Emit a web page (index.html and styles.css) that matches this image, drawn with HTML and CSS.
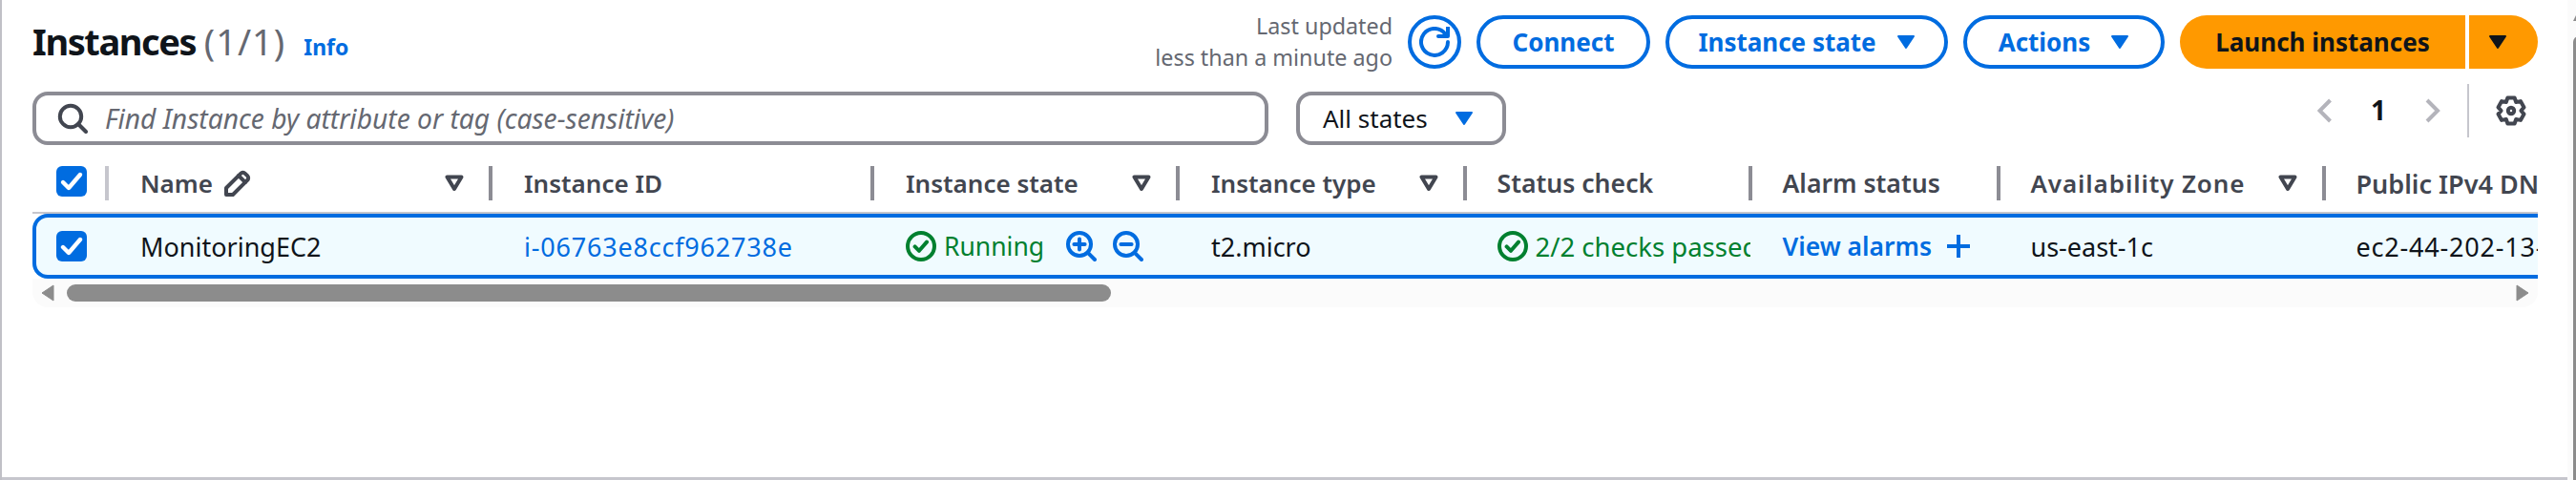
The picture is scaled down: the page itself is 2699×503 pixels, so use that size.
FILE: index.html
```html
<!DOCTYPE html>
<html lang="en">
<head>
<meta charset="utf-8">
<title>Instances</title>
<link rel="stylesheet" href="styles.css">
</head>
<body>
<div class="window">
  <main class="main">
    <header class="head">
      <h1 class="title">Instances <span class="count">(1/1)</span><a class="info">Info</a></h1>
      <div class="actions">
        <p class="updated">Last updated<br>less than a minute ago</p>
        <button class="btn round"><svg class="i32" viewBox="0 0 16 16"><path class="st" d="M15 8a7 7 0 1 1-1.3-4.1"/><path class="st" d="M10 5h5V0"/></svg></button>
        <button class="btn connect">Connect</button>
        <button class="btn state">Instance state<svg class="caret" viewBox="0 0 20 16"><path d="M2 2h16l-8 12z"/></svg></button>
        <button class="btn acts">Actions<svg class="caret" viewBox="0 0 20 16"><path d="M2 2h16l-8 12z"/></svg></button>
        <div class="launch">
          <button class="lmain">Launch instances</button>
          <button class="lcaret"><svg class="caret" viewBox="0 0 20 16"><path d="M2 2h16l-8 12z"/></svg></button>
        </div>
      </div>
    </header>

    <div class="tools">
      <div class="search">
        <svg class="i32 sicon" viewBox="0 0 16 16"><circle class="st" cx="7" cy="7" r="5.6"/><path class="st" d="M11 11l4 4"/></svg>
        <span class="ph">Find Instance by attribute or tag (case-sensitive)</span>
      </div>
      <div class="select">All states<svg class="caret" viewBox="0 0 20 16"><path d="M2 2h16l-8 12z"/></svg></div>
      <div class="pager">
        <svg class="chev" viewBox="0 0 18 28"><path d="M13.500 3L2.500 14l11 11"/></svg>
        <span class="pnum">1</span>
        <svg class="chev" viewBox="0 0 18 28"><path d="M3 3l11 11L3 25"/></svg>
        <span class="pdiv"></span>
        <svg class="i32 gear" viewBox="0 0 16 16"><path class="st" d="M6.19 1.24h3.62l.79 2.26 2.35-.45 1.81 3.14-1.56 1.81 1.56 1.81-1.81 3.14-2.35-.45-.79 2.26H6.19l-.79-2.26-2.35.45-1.81-3.14L2.8 8 1.24 6.19l1.81-3.14 2.35.45z"/><circle class="st" cx="8" cy="8" r="1.6"/></svg>
      </div>
    </div>

    <div class="tablewrap">
      <div class="grid hrow">
        <div class="hc cb"><span class="check"><svg viewBox="0 0 16 16"><path d="M3.5 8.5l3 3 6-7"/></svg></span></div>
        <div class="hc">Name<svg class="i32 pencil" viewBox="0 0 16 16"><path class="st" d="M2 14v-3.5l7.6-7.6a1.6 1.6 0 0 1 2.3 0l1.2 1.2a1.6 1.6 0 0 1 0 2.3L5.500 14z"/><path class="st" d="M8.500 4l3.500 3.500"/></svg><svg class="filter" viewBox="0 0 20 18"><path d="M2.500 2.500h15L10 15z"/></svg></div>
        <div class="hc">Instance ID</div>
        <div class="hc">Instance state<svg class="filter" viewBox="0 0 20 18"><path d="M2.500 2.500h15L10 15z"/></svg></div>
        <div class="hc">Instance type<svg class="filter" viewBox="0 0 20 18"><path d="M2.500 2.500h15L10 15z"/></svg></div>
        <div class="hc wide">Status check</div>
        <div class="hc wide">Alarm status</div>
        <div class="hc"><span class="az">Availability Zone</span><svg class="filter" viewBox="0 0 20 18"><path d="M2.500 2.500h15L10 15z"/></svg></div>
        <div class="hc last">Public IPv4 DNS</div>
      </div>
      <div class="grid drow">
        <div class="dc cb"><span class="check"><svg viewBox="0 0 16 16"><path d="M3.5 8.500l3 3 6-7"/></svg></span></div>
        <div class="dc">MonitoringEC2</div>
        <div class="dc link digits">i-06763e8ccf962738e</div>
        <div class="dc ok run">
          <svg class="i32 okicon" viewBox="0 0 16 16"><circle class="st" cx="8" cy="8" r="7"/><path class="st" d="M4.800 8.200l2.200 2.200 4-4.600"/></svg>Running
          <svg class="i32 zoomin" viewBox="0 0 16 16"><circle class="st" cx="7" cy="7" r="6"/><path class="st" d="M11.300 11.300l3.700 3.700M4.200 7h5.600M7 4.200v5.600"/></svg>
          <svg class="i32 zoomout" viewBox="0 0 16 16"><circle class="st" cx="7" cy="7" r="6"/><path class="st" d="M11.300 11.300l3.700 3.700M4.200 7h5.600"/></svg>
        </div>
        <div class="dc">t2.micro</div>
        <div class="dc ok clip"><svg class="i32 okicon" viewBox="0 0 16 16"><circle class="st" cx="8" cy="8" r="7"/><path class="st" d="M4.800 8.200l2.200 2.200 4-4.600"/></svg>2/2 checks passed</div>
        <div class="dc alarms">View alarms<svg class="plus" viewBox="0 0 24 24"><path d="M12 0v24M0 12h24"/></svg></div>
        <div class="dc">us-east-1c</div>
        <div class="dc digits">ec2-44-202-13-27.compute-1.amazonaws.com</div>
      </div>
      <div class="hscroll">
        <svg class="arrow" viewBox="0 0 14 18"><path d="M13 1v16L1 9z"/></svg>
        <span class="thumb"></span>
        <svg class="arrow right" viewBox="0 0 14 18"><path d="M1 1v16l12-8z"/></svg>
      </div>
    </div>
  </main>
  <aside class="vscroll"><svg class="varrow" viewBox="0 0 8 8"><path d="M4 0l4 8H0z"/></svg><span class="vthumb"></span></aside>
</div>
</body>
</html>
```
FILE: styles.css
```css
* { box-sizing: border-box; }
html, body { margin: 0; background: #fff; }
body { font-family: "Noto Sans", "Open Sans", sans-serif; color: #0f141a; }
.window { display: flex; width: 2699px; height: 503px; border-left: 2px solid #c0c0c6; overflow: hidden; }
.main { width: 2688px; padding: 16px 31px 0 32px; flex: none; border-bottom: 3px solid #c6c6cd; }

.st { fill: none; stroke: currentColor; stroke-width: 2; stroke-linecap: round; stroke-linejoin: round; }
.i32 { width: 32px; height: 32px; flex: none; display: block; }
.caret { width: 20px; height: 16px; flex: none; display: block; fill: currentColor; stroke: currentColor; stroke-width: 2; stroke-linejoin: round; }

.head { display: flex; justify-content: space-between; height: 56px; }
.title { margin: 0; font-size: 38px; line-height: 54px; font-weight: 700; letter-spacing: -1.4px; color: #0f141a; white-space: nowrap; }
.count { font-weight: 400; color: #656871; letter-spacing: 1px; }
.info { margin-left: 19px; font-size: 23px; font-weight: 700; letter-spacing: 0; color: #006ce0; }
.actions { display: flex; align-items: stretch; gap: 16px; }
.updated { margin: 0; font-size: 23.3px; line-height: 33px; color: #656871; text-align: right; align-self: center; }
.btn { height: 56px; border: 4px solid #006ce0; border-radius: 28px; background: #fff; color: #006ce0; font: 700 26px "Noto Sans", sans-serif; padding: 0; display: flex; align-items: center; justify-content: center; }
.round { width: 56px; }
.connect { width: 182px; }
.state { width: 296px; gap: 21px; }
.acts { width: 211px; gap: 21px; }
.launch { display: flex; gap: 4px; height: 56px; }
.lmain, .lcaret { border: 0; background: #ff9900; color: #0f141a; font: 700 26px "Noto Sans", sans-serif; padding: 0; }
.lmain { width: 299px; border-radius: 28px 0 0 28px; }
.lcaret { width: 72px; border-radius: 0 28px 28px 0; display: flex; align-items: center; justify-content: center; padding-right: 12px; }

.tools { display: flex; margin-top: 24px; height: 56px; }
.search { width: 1295px; border: 4px solid #8c8c94; border-radius: 16px; display: flex; align-items: center; }
.sicon { margin-left: 22px; color: #424650; }
.ph { margin-left: 18px; font-size: 28.2px; font-style: italic; color: #656871; }
.select { margin-left: 29px; width: 220px; border: 4px solid #8c8c94; border-radius: 16px; display: flex; align-items: center; padding-left: 24px; gap: 28px; font-size: 26px; color: #0f141a; white-space: nowrap; }
.select .caret { color: #006ce0; }
.pager { margin: -8px 0 0 auto; display: flex; align-items: center; height: 56px; }
.chev { width: 18px; height: 28px; fill: none; stroke: #b4b4bb; stroke-width: 4; flex: none; }
.pnum { width: 92px; margin: -3px 2px 0 0; text-align: center; font-size: 28px; font-weight: 700; }
.pdiv { width: 2px; height: 56px; background: #c6c6cd; margin-left: 27px; }
.gear { margin: 0 12px 0 28px; color: #424650; }

.tablewrap { width: 2625px; margin-top: 22px; overflow: hidden; }
.grid { display: grid; grid-template-columns: 80px 402px 400px 320px 301px 299px 260px 341px 400px; width: 2803px; }
.hrow { height: 50px; border-bottom: 2px solid #c6c6cd; align-items: start; }
.hc { height: 36px; padding: 0 26px 0 33px; border-right: 4px solid #8c8c94; display: flex; align-items: center; font-size: 26px; font-weight: 600; color: #424650; white-space: nowrap; }
.hc.cb { border-right-color: #c6c6cd; padding: 0 0 4px 25px; align-items: flex-start; }
.hc.wide { font-size: 26.6px; }
.az { letter-spacing: .9px; }
.hc.last { border-right: 0; font-size: 27px; }
.hc:nth-child(n+6) { padding-left: 31.5px; }
.pencil { margin-left: 10px; color: #424650; }
.filter { width: 20px; height: 18px; margin-left: auto; flex: none; fill: none; stroke: #424650; stroke-width: 4; stroke-linejoin: round; }
.check { width: 32px; height: 32px; background: #006ce0; border-radius: 6px; display: block; }
.check svg { display: block; fill: none; stroke: #fff; stroke-width: 2.2; stroke-linecap: round; stroke-linejoin: round; }
.drow { height: 68px; background: #f0fbff; box-shadow: inset 0 0 0 4px #006ce0; border-radius: 16px 0 0 16px; align-items: center; }
.dc { padding-left: 33px; display: flex; align-items: center; font-size: 27px; white-space: nowrap; color: #0f141a; }
.dc:nth-child(n+6) { padding-left: 31.5px; }
.dc.cb { padding-left: 25px; }
.digits { letter-spacing: .8px; }
.dc.link { color: #006ce0; }
.dc.ok { color: #00802f; }
.dc.run { font-size: 26.5px; }
.okicon { margin-right: 8px; }
.zoomin { margin-left: 23px; color: #006ce0; }
.zoomout { margin-left: 17px; color: #006ce0; }
.dc.clip { margin-right: 2px; font-size: 27.5px; overflow: hidden; }
.dc.alarms { color: #006ce0; font-weight: 600; font-size: 26.5px; }
.plus { width: 24px; height: 24px; margin-left: 16px; fill: none; stroke: #006ce0; stroke-width: 4; flex: none; }
.hscroll { height: 30px; background: #fbfbfb; display: flex; align-items: flex-start; padding: 6px 9px 0; gap: 13px; border-radius: 0 0 16px 16px; }
.arrow { width: 14px; height: 18px; fill: #8c8c8c; stroke: #8c8c8c; stroke-linejoin: round; flex: none; }
.arrow.right { margin-left: auto; }
.thumb { width: 1094px; height: 18px; border-radius: 9px; background: #8c8c8c; }

.vscroll { width: 9px; flex: none; background: #fbfbfb; padding: 15px 0 0 6px; }
.varrow { display: block; width: 6px; height: 8px; fill: #8c8c8c; }
.vthumb { display: block; width: 6px; height: 470px; margin-top: 15px; border-radius: 6px 0 0 6px; background: #8c8c8c; }
```
